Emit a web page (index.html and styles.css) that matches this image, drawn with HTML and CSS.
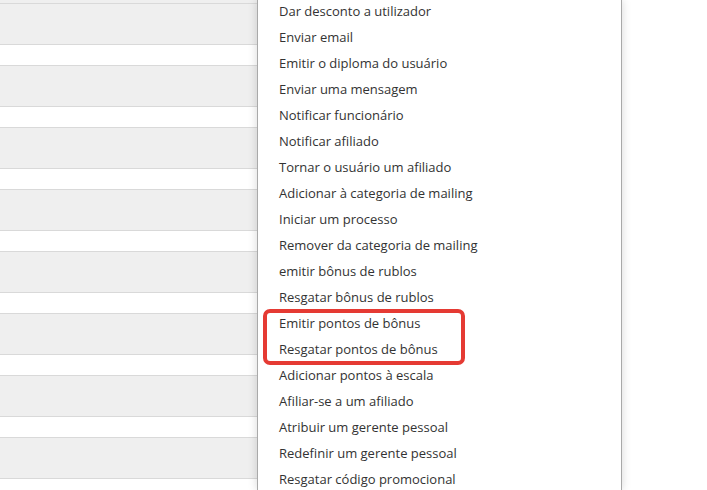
FILE: index.html
```html
<!DOCTYPE html>
<html>
<head>
<meta charset="utf-8">
<link rel="stylesheet" href="styles.css">
</head>
<body>
<div class="table">
  <div class="row row-top"></div>
  <div class="row row-tall"></div><div class="row row-short"></div>
  <div class="row row-tall"></div><div class="row row-short"></div>
  <div class="row row-tall"></div><div class="row row-short"></div>
  <div class="row row-tall"></div><div class="row row-short"></div>
  <div class="row row-tall"></div><div class="row row-short"></div>
  <div class="row row-tall"></div><div class="row row-short"></div>
  <div class="row row-tall"></div><div class="row row-short"></div>
  <div class="row row-tall"></div><div class="row row-short"></div>
</div>
<ul class="menu">
  <li>Dar desconto a utilizador</li>
  <li>Enviar email</li>
  <li>Emitir o diploma do usuário</li>
  <li>Enviar uma mensagem</li>
  <li>Notificar funcionário</li>
  <li>Notificar afiliado</li>
  <li>Tornar o usuário um afiliado</li>
  <li>Adicionar à categoria de mailing</li>
  <li>Iniciar um processo</li>
  <li>Remover da categoria de mailing</li>
  <li>emitir bônus de rublos</li>
  <li>Resgatar bônus de rublos</li>
  <li>Emitir pontos de bônus</li>
  <li>Resgatar pontos de bônus</li>
  <li>Adicionar pontos à escala</li>
  <li>Afiliar-se a um afiliado</li>
  <li>Atribuir um gerente pessoal</li>
  <li>Redefinir um gerente pessoal</li>
  <li>Resgatar código promocional</li>
</ul>
<div class="highlight"></div>
</body>
</html>
```

FILE: styles.css
```css
html, body {
  margin: 0;
  padding: 0;
  background: #ffffff;
  overflow: hidden;
  width: 707px;
  height: 490px;
}
body {
  position: relative;
  font-family: "Open Sans", "Liberation Sans", sans-serif;
}
.table {
  width: 621px;
  height: 490px;
  overflow: hidden;
  display: flex;
  flex-direction: column;
}
.row {
  border-bottom: 1px solid #d9d9d9;
  flex: none;
}
.row-top { height: 3px; background: #efefef; }
.row-tall { height: 40px; background: #efefef; }
.row-short { height: 20px; background: #ffffff; }

.menu {
  position: absolute;
  left: 257px;
  top: 0;
  width: 363px;
  height: 490px;
  overflow: hidden;
  margin: 0;
  padding: 0;
  list-style: none;
  background: #ffffff;
  border-left: 1px solid #a9a9a9;
  border-right: 1px solid #a9a9a9;
  box-shadow: 0 0 9px rgba(0, 0, 0, 0.16);
}
.menu li {
  height: 26px;
  line-height: 26px;
  padding-left: 21px;
  font-size: 13px;
  color: #333333;
  white-space: nowrap;
}
.menu li:first-child {
  margin-top: -2px;
}
.highlight {
  position: absolute;
  left: 263px;
  top: 309px;
  width: 194px;
  height: 48px;
  border: 4px solid #e53a33;
  border-radius: 7px;
}
```
